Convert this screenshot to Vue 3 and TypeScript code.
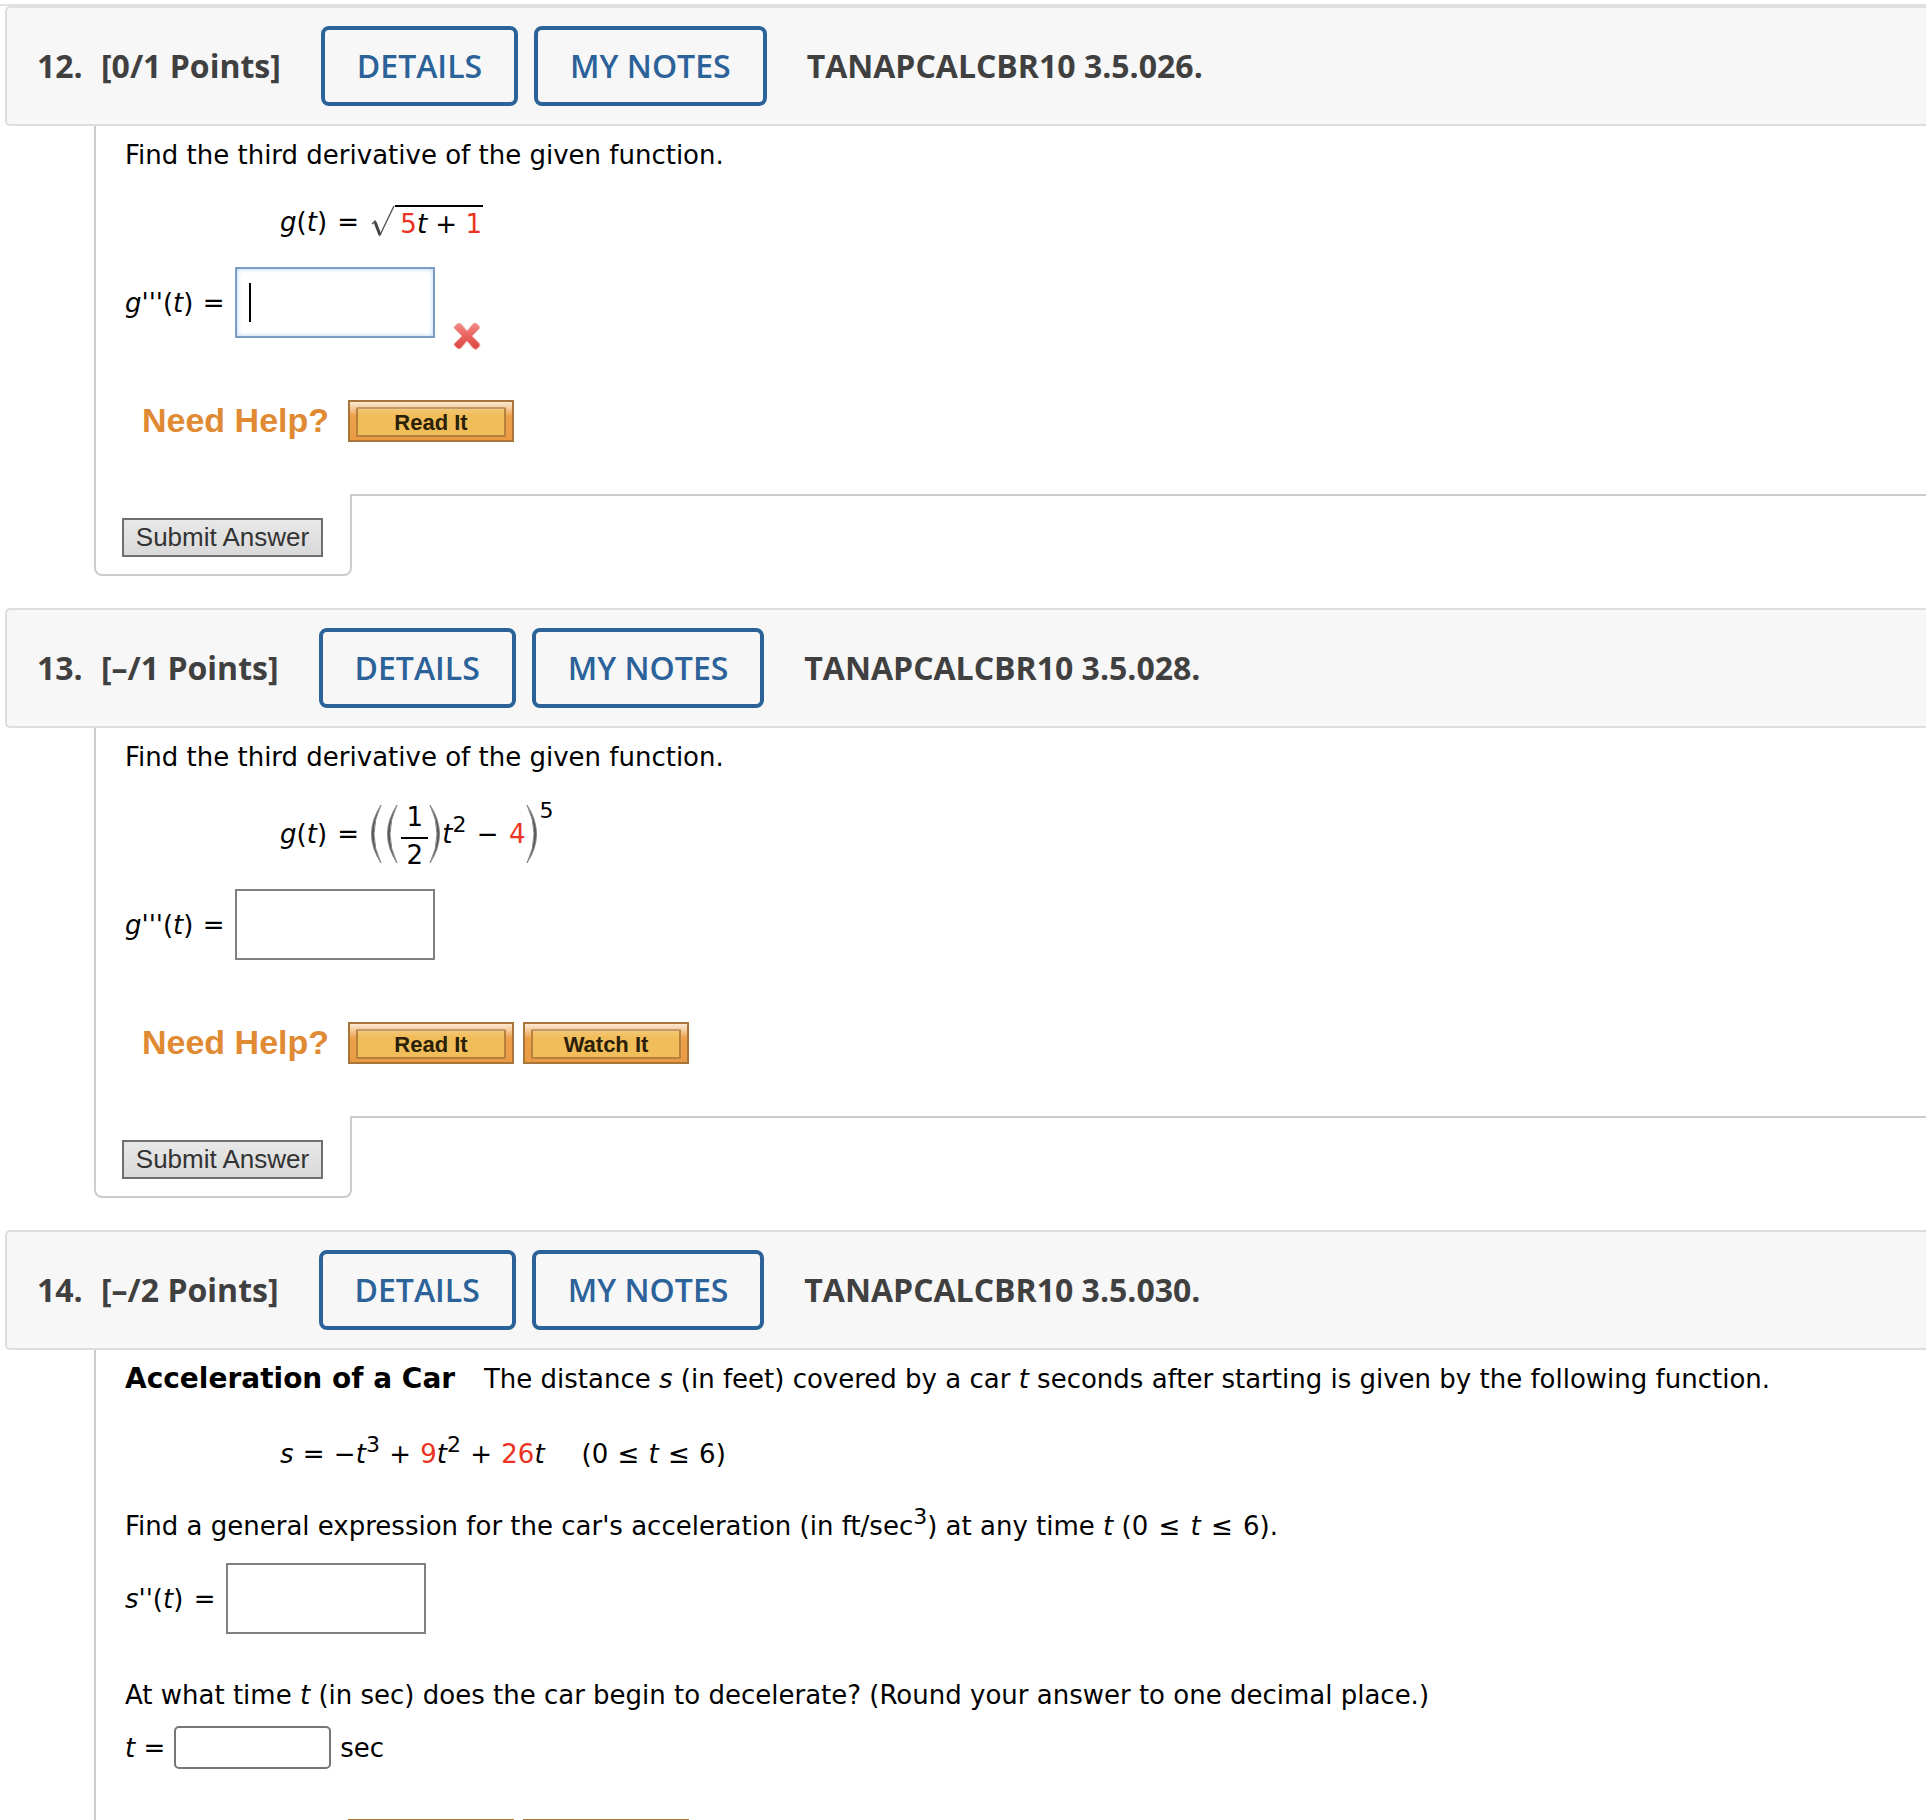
<script setup lang="ts">
interface Problem {
  number: number
  points: string
  code: string
  help: string[]
}

const problems: Problem[] = [
  { number: 12, points: '[0/1 Points]', code: 'TANAPCALCBR10 3.5.026.', help: ['Read It'] },
  { number: 13, points: '[–/1 Points]', code: 'TANAPCALCBR10 3.5.028.', help: ['Read It', 'Watch It'] },
  { number: 14, points: '[–/2 Points]', code: 'TANAPCALCBR10 3.5.030.', help: ['Read It', 'Watch It'] },
]
</script>

<template>
  <main class="page">
    <section v-for="problem in problems" :key="problem.number" class="problem">
      <header class="bar">
        <span class="number">{{ problem.number }}.</span>
        <span class="points">{{ problem.points }}</span>
        <button type="button" class="outline">DETAILS</button>
        <button type="button" class="outline">MY NOTES</button>
        <span class="code">{{ problem.code }}</span>
      </header>

      <div class="body">
        <template v-if="problem.number === 12">
          <p class="text">Find the third derivative of the given function.</p>
          <div class="formula root-formula">
            <span><i>g</i>(<i>t</i>)&nbsp;<span class="op">=</span>&nbsp;</span>
            <svg class="radical" viewBox="0 0 24 34" aria-hidden="true">
              <path d="M1 19 L4 16 L9 30 L23 1" fill="none" stroke="#555" stroke-width="1.4" />
              <path d="M4 17 L9 30" fill="none" stroke="#444" stroke-width="3" />
            </svg>
            <span class="radicand"><b class="red">5</b><i>t</i> + <b class="red">1</b></span>
          </div>
          <div class="answer after-root">
            <label for="answer-12"><i>g'''</i>(<i>t</i>)&nbsp;<span class="rel">=</span></label>
            <span class="field">
              <input id="answer-12" class="box active" type="text" />
              <span class="caret"></span>
            </span>
            <svg class="wrong" viewBox="0 0 28 28" role="img" aria-label="Incorrect">
              <defs>
                <linearGradient id="wrong-fill" x1="0" y1="0" x2="0" y2="1">
                  <stop offset="0" stop-color="#f08a84" />
                  <stop offset="0.5" stop-color="#e9635e" />
                  <stop offset="1" stop-color="#dc4640" />
                </linearGradient>
              </defs>
              <path
                d="M6 2 Q7 1 8 2 L14 9 L20 2 Q22 0 24 2 L26 4 Q27 6 26 7 L19 14 L26 21 Q28 23 26 25 L24 27 Q22 28 20 26 L14 19 L8 26 Q6 28 4 26 L2 24 Q0 22 2 21 L9 14 L2 7 Q0 6 2 4 L4 2 Q5 1 6 2 Z"
                fill="url(#wrong-fill)"
                stroke="#f3aaa6"
                stroke-width="1"
              />
            </svg>
          </div>
        </template>

        <template v-else-if="problem.number === 13">
          <p class="text">Find the third derivative of the given function.</p>
          <div class="formula power-formula">
            <span><i>g</i>(<i>t</i>)&nbsp;<span class="op">=</span>&nbsp;</span>
            <svg class="paren open" viewBox="0 0 14 60" aria-hidden="true">
              <path d="M12 1 Q-7 30 12 59 Q-2 30 12 1 Z" fill="#555" stroke="#888" />
            </svg>
            <svg class="paren open" viewBox="0 0 14 60" aria-hidden="true">
              <path d="M12 1 Q-7 30 12 59 Q-2 30 12 1 Z" fill="#555" stroke="#888" />
            </svg>
            <span class="fraction"><span class="numerator">1</span><span>2</span></span>
            <svg class="paren" viewBox="0 0 14 60" aria-hidden="true">
              <path d="M2 1 Q21 30 2 59 Q16 30 2 1 Z" fill="#555" stroke="#888" />
            </svg>
            <span><i>t</i><sup>2</sup> <span class="op">−</span> <b class="red">4</b></span>
            <svg class="paren" viewBox="0 0 14 60" aria-hidden="true">
              <path d="M2 1 Q21 30 2 59 Q16 30 2 1 Z" fill="#555" stroke="#888" />
            </svg>
            <span class="outer-power">5</span>
          </div>
          <div class="answer">
            <label for="answer-13"><i>g'''</i>(<i>t</i>)&nbsp;<span class="rel">=</span></label>
            <input id="answer-13" class="box" type="text" />
          </div>
        </template>

        <template v-else>
          <p class="text"><strong>Acceleration of a Car</strong>&nbsp;&nbsp; The distance <i>s</i> (in feet) covered by a car <i>t</i> seconds after starting is given by the following function.</p>
          <div class="formula">
            <span><i>s</i> <span class="rel">=</span> −<i>t</i><sup>3</sup> <span class="rel">+</span> <b class="red">9</b><i>t</i><sup>2</sup> <span class="rel">+</span> <b class="red">26</b><i>t</i></span>
            <span class="domain">(0 <span class="rel">≤</span> <i>t</i> <span class="rel">≤</span> 6)</span>
          </div>
          <p class="text general">Find a general expression for the car's acceleration (in ft/sec<sup>3</sup>) at any time <i>t</i> (0 <span class="op">≤</span> <i>t</i> <span class="op">≤</span> 6).</p>
          <div class="answer close">
            <label for="answer-14a"><i>s</i>''(<i>t</i>)&nbsp;<span class="op">=</span></label>
            <input id="answer-14a" class="box" type="text" />
          </div>
          <p class="text when">At what time <i>t</i> (in sec) does the car begin to decelerate? (Round your answer to one decimal place.)</p>
          <div class="answer short">
            <label for="answer-14b"><i>t</i>&nbsp;=</label>
            <input id="answer-14b" class="small-box" type="text" />
            <span>sec</span>
          </div>
        </template>

        <div class="help" :class="{ tight: problem.number === 14 }">
          <span class="need">Need Help?</span>
          <button v-for="item in problem.help" :key="item" type="button" class="gold">
            <span>{{ item }}</span>
          </button>
        </div>
      </div>

      <footer class="foot">
        <div class="tab">
          <button type="button" class="submit">Submit Answer</button>
        </div>
        <div class="rule"></div>
      </footer>
    </section>
  </main>
</template>

<style>
body {
  margin: 0;
  background: #fff;
}
</style>

<style scoped>
.page {
  margin-top: 4px;
  border-top: 2px solid #e1e1e1;
  color: #000;
  font-family: "DejaVu Sans", Verdana, sans-serif;
  font-size: 26px;
  line-height: 32px;
}

.problem {
  margin-bottom: 32px;
}

.bar {
  display: flex;
  align-items: center;
  box-sizing: border-box;
  height: 120px;
  margin-left: 5px;
  padding-left: 30px;
  border: 2px solid #dedede;
  border-right: 0;
  border-radius: 5px 0 0 5px;
  background: #f7f7f7;
  color: #404040;
  font-family: "Open Sans", sans-serif;
  font-size: 32px;
  font-weight: 700;
  line-height: 44px;
  white-space: nowrap;
}

.number {
  width: 64px;
}

.points {
  margin-right: 40px;
}

.outline {
  box-sizing: border-box;
  height: 80px;
  margin-right: 16px;
  padding: 0 32px;
  border: 4px solid #2a6299;
  border-radius: 8px;
  background: transparent;
  color: #2a6299;
  font: 600 32px/44px "Open Sans", sans-serif;
}

.code {
  margin-left: 24px;
}

.body {
  margin-left: 94px;
  padding: 13px 0 52px 29px;
  border-left: 2px solid #ccc;
}

.text {
  margin: 0;
  white-space: nowrap;
}

.text strong {
  margin-right: 4px;
  font-size: 28px;
}

.red {
  color: #eb3323;
  font-weight: 400;
}

.op {
  margin: 0 2px;
}

.rel {
  margin: 0 1px;
}

.domain {
  margin-left: 37px;
}

sup {
  font-size: 22px;
  line-height: 0;
  vertical-align: 11px;
}

.formula {
  display: flex;
  align-items: center;
  margin: 43px 0 0 155px;
  white-space: nowrap;
}

.root-formula {
  height: 34px;
  margin-top: 34px;
}

.power-formula {
  height: 62px;
  margin-top: 30px;
}

.radical {
  width: 24px;
  height: 34px;
  margin-left: 2px;
}

.radicand {
  padding: 1px 1px 0 5px;
  border-top: 2px solid #000;
}

.paren {
  width: 14px;
  height: 60px;
}

.paren.open {
  margin-right: 2px;
}

.fraction {
  display: flex;
  flex-direction: column;
  align-items: center;
  width: 27px;
}

.numerator {
  width: 27px;
  margin-top: 4px;
  padding-bottom: 4px;
  border-bottom: 2px solid #000;
  text-align: center;
}

.outer-power {
  align-self: flex-start;
  font-size: 22px;
  line-height: 16px;
}

.answer {
  display: flex;
  align-items: center;
  gap: 9px;
  height: 71px;
  margin-top: 24px;
}

.answer.after-root {
  margin-top: 28px;
}

.answer.close {
  margin-top: 21px;
}

.answer.short {
  height: 43px;
  margin-top: 15px;
}

.field {
  position: relative;
  display: flex;
}

.box {
  box-sizing: border-box;
  width: 200px;
  height: 71px;
  padding: 0 12px;
  border: 2px solid #808080;
  background: #fff;
  font: inherit;
}

.box.active {
  border-color: #7b9dc4;
  box-shadow: inset 0 0 5px #b9d3f5;
}

.caret {
  position: absolute;
  top: 16px;
  left: 14px;
  width: 2px;
  height: 39px;
  background: #000;
}

.small-box {
  box-sizing: border-box;
  width: 157px;
  height: 43px;
  padding: 0 8px;
  border: 2px solid #767676;
  border-radius: 5px;
  background: #fff;
  font: inherit;
}

.wrong {
  align-self: flex-end;
  width: 28px;
  height: 28px;
  margin: 0 0 -12px 9px;
}

.general {
  margin-top: 40px;
}

.when {
  margin-top: 45px;
}

.help {
  display: flex;
  align-items: center;
  gap: 9px;
  height: 42px;
  margin: 62px 0 0 17px;
}

.help.tight {
  margin-top: 50px;
}

.need {
  width: 197px;
  padding-bottom: 2px;
  color: #e08a33;
  font: 700 34px/40px "Liberation Sans", Arial, sans-serif;
}

.gold {
  box-sizing: border-box;
  width: 166px;
  height: 42px;
  padding: 5px 6px;
  border: 2px solid #a9763a;
  background: linear-gradient(#fbe9d2 0, #f5c795 7px, #eda04a 14px, #ea9a45 100%);
  color: #2b2008;
  font: 700 22px/24px "Liberation Sans", Arial, sans-serif;
}

.gold span {
  display: block;
  padding-top: 2px;
  border: 2px solid #b5813b;
  border-top-color: #c09a6b;
  border-radius: 2px;
  background: linear-gradient(#f3c778 0, #f1bd5a 6px, #f1bd5a 100%);
}

.foot {
  display: flex;
  margin-left: 94px;
}

.tab {
  box-sizing: border-box;
  width: 258px;
  height: 82px;
  padding: 24px 26px 0;
  border: 2px solid #ccc;
  border-top: 0;
  border-radius: 0 0 8px 8px;
}

.submit {
  box-sizing: border-box;
  display: block;
  width: 201px;
  height: 39px;
  padding: 0 0 2px;
  border: 2px solid #6f6f6f;
  background: linear-gradient(#e8e8e8, #d9d9d9);
  color: #333;
  font: 400 26px/32px "Liberation Sans", Arial, sans-serif;
}

.rule {
  flex: 1;
  border-top: 2px solid #ccc;
}
</style>
